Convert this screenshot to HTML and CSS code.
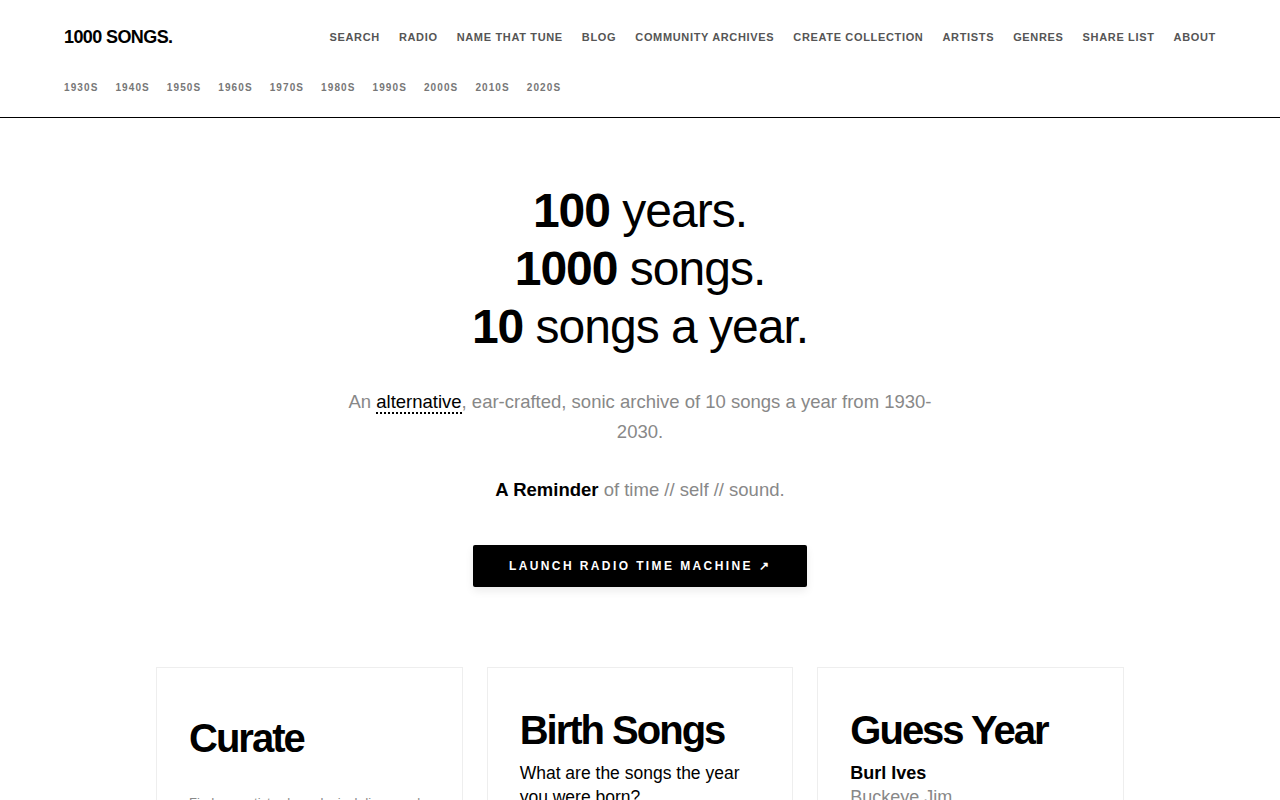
FILE: index.html
```html
<!DOCTYPE html>
<html lang="en">
<head>
<meta charset="utf-8">
<title>1000 Songs</title>
<link rel="stylesheet" href="styles.css">
</head>
<body>
<header class="site-header">
  <div class="top-row">
    <a class="logo" href="#">1000 SONGS.</a>
    <nav class="main-nav">
      <a href="#">Search</a>
      <a href="#">Radio</a>
      <a href="#">Name That Tune</a>
      <a href="#">Blog</a>
      <a href="#">Community Archives</a>
      <a href="#">Create Collection</a>
      <a href="#">Artists</a>
      <a href="#">Genres</a>
      <a href="#">Share List</a>
      <a href="#">About</a>
    </nav>
  </div>
  <nav class="decades">
    <a href="#">1930s</a>
    <a href="#">1940s</a>
    <a href="#">1950s</a>
    <a href="#">1960s</a>
    <a href="#">1970s</a>
    <a href="#">1980s</a>
    <a href="#">1990s</a>
    <a href="#">2000s</a>
    <a href="#">2010s</a>
    <a href="#">2020s</a>
  </nav>
</header>

<main>
  <section class="hero">
    <h1 class="headline">
      <span class="line"><b>100</b> years.</span>
      <span class="line"><b>1000</b> songs.</span>
      <span class="line"><b>10</b> songs a year.</span>
    </h1>
    <p class="intro">An <a class="alt" href="#">alternative</a>, ear-crafted, sonic archive of 10 songs a year from 1930-2030.</p>
    <p class="reminder"><b>A Reminder</b> of time // self // sound.</p>
    <a class="launch" href="#">Launch Radio Time Machine ↗</a>
  </section>

  <section class="cards">
    <article class="card card-curate">
      <h2>Curate</h2>
      <p class="small">Find any artists chronological discography</p>
    </article>
    <article class="card">
      <h2>Birth Songs</h2>
      <p class="lead">What are the songs the year you were born?</p>
    </article>
    <article class="card">
      <h2>Guess Year</h2>
      <p class="artist">Burl Ives</p>
      <p class="song">Buckeye Jim</p>
    </article>
  </section>
</main>
</body>
</html>
```
FILE: styles.css
```css
* { box-sizing: border-box; }
html, body { margin: 0; padding: 0; }
body {
  font-family: "Liberation Sans", Arial, sans-serif;
  color: #000;
  background: #fff;
}
a { color: inherit; text-decoration: none; }

.site-header {
  border-bottom: 1px solid #000;
  padding: 0 64px;
}
.top-row {
  display: flex;
  align-items: center;
  justify-content: space-between;
  height: 74px;
}
.logo {
  font-size: 18px;
  font-weight: bold;
  letter-spacing: -0.6px;
  color: #000;
}
.main-nav {
  display: flex;
  gap: 19px;
}
.main-nav a {
  font-size: 11px;
  font-weight: bold;
  letter-spacing: 0.66px;
  text-transform: uppercase;
  color: #555;
}
.decades {
  display: flex;
  gap: 17px;
  height: 43px;
  align-items: flex-start;
  padding-top: 8px;
}
.decades a {
  font-size: 10px;
  font-weight: bold;
  letter-spacing: 1.1px;
  text-transform: uppercase;
  color: #777;
}

.hero {
  display: flex;
  flex-direction: column;
  align-items: center;
  text-align: center;
  padding-top: 64px;
}
.headline {
  margin: 0;
  font-size: 48px;
  font-weight: normal;
  letter-spacing: -1px;
  line-height: 58px;
}
.headline .line { display: block; }
.headline b { font-weight: bold; }
.intro {
  margin: 31px 0 0;
  width: 600px;
  font-size: 18.5px;
  line-height: 30px;
  color: #888;
}
.alt {
  color: #000;
  border-bottom: 2px dotted #000;
}
.reminder {
  margin: 28px 0 0;
  font-size: 18.5px;
  line-height: 30px;
  color: #888;
}
.reminder b { color: #000; }
.launch {
  margin-top: 40px;
  display: flex;
  align-items: center;
  justify-content: center;
  width: 334px;
  height: 42px;
  background: #000;
  color: #fff;
  border-radius: 2px;
  font-size: 12px;
  font-weight: bold;
  letter-spacing: 2.4px;
  text-transform: uppercase;
  box-shadow: 0 4px 8px rgba(0,0,0,0.08);
}

.cards {
  display: grid;
  grid-template-columns: repeat(3, 1fr);
  gap: 24px;
  width: 968px;
  margin: 80px auto 0;
}
.card {
  border: 1px solid #eee;
  padding: 35px 20px 32px 32px;
  min-height: 200px;
}
.card h2 {
  margin: 0;
  font-size: 40px;
  letter-spacing: -2px;
  line-height: 54px;
  font-weight: bold;
}
.card-curate h2 { margin-top: 8px; }
.small {
  margin: 30px 0 0;
  font-size: 13px;
  color: #888;
}
.lead {
  margin: 4px 0 0;
  padding-right: 12px;
  font-size: 17.5px;
  line-height: 24px;
  color: #000;
}
.artist {
  margin: 4px 0 0;
  font-size: 18px;
  font-weight: bold;
  line-height: 24px;
}
.song {
  margin: 0;
  font-size: 18px;
  line-height: 24px;
  color: #888;
}
```
